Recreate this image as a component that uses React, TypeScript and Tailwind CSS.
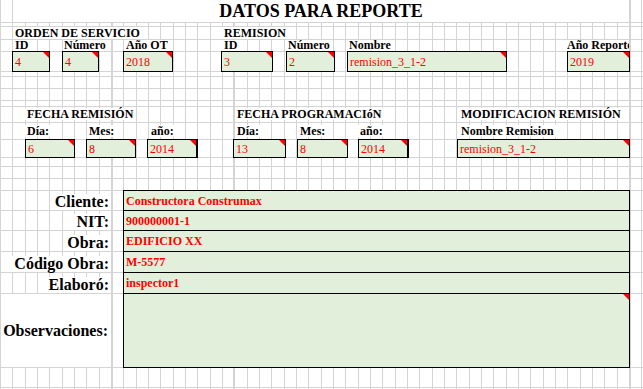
import type { ReactNode } from 'react'

// hoja tipo Excel: líneas verticales de la cuadrícula en el fondo
const VGRID =
  '[background-image:linear-gradient(to_right,transparent_112px,#d4d4d4_112px_113px,transparent_113px_233px,#d4d4d4_233px_234px,transparent_234px_630px,#d4d4d4_630px_631px,transparent_631px),linear-gradient(to_right,#d4d4d4_1px,transparent_1px_12px,#d4d4d4_12px_13px,transparent_13px_25px,#d4d4d4_25px_26px,transparent_26px)] [background-size:100%_100%,37px_100%]'

const ROW = 'flex shrink-0 border-b border-[#d4d4d4]'

function Flag() {
  return (
    <svg className="absolute right-0 top-0" width="6" height="6" viewBox="0 0 6 6">
      <polygon points="0,0 6,0 6,6" fill="#ff0000" />
    </svg>
  )
}

function Lbl({ children, className = '' }: { children: ReactNode; className?: string }) {
  return (
    <span className={`whitespace-nowrap bg-white px-[2px] text-[12px] font-bold ${className}`}>
      {children}
    </span>
  )
}

function Box({ value, className }: { value: string; className: string }) {
  return (
    <div
      className={`relative -mt-px flex shrink-0 items-center border border-black bg-[#e2efda] pl-[2px] text-[12px] leading-[12px] text-[#ff0000] ${className}`}
    >
      <span className="whitespace-nowrap">{value}</span>
      <Flag />
    </div>
  )
}

type FieldProps = { label: string; value: string; row: string; box: string }

function Field({ label, value, row, box }: FieldProps) {
  return (
    <div className={`${ROW} ${row}`}>
      <div className="flex w-[111px] shrink-0 items-end justify-end leading-[16px]">
        <span className="whitespace-nowrap bg-white px-[2px] text-[16px] font-bold">{label}</span>
      </div>
      <div
        className={`relative ml-[12px] -mt-px flex w-[507px] shrink-0 items-center border border-black bg-[#e2efda] pl-[2px] text-[12px] font-bold leading-[12px] text-[#ff0000] ${box}`}
      >
        {value}
      </div>
    </div>
  )
}

export default function App() {
  return (
    <div
      className={`flex h-[389px] w-[643px] flex-col overflow-hidden bg-white font-['Liberation_Serif','Times_New_Roman',serif] text-black ${VGRID}`}
    >
      {/* título */}
      <div className={`${ROW} h-[23px]`}>
        <div className="ml-[13px] w-[616px] bg-white text-center text-[18px] font-bold leading-[22px]">
          DATOS PARA REPORTE
        </div>
      </div>
      <div className={`${ROW} h-[4px]`} />

      {/* orden de servicio / remision */}
      <div className={`${ROW} h-[13px] items-end leading-[12px]`}>
        <div className="ml-[13px] flex w-[209px] shrink-0">
          <Lbl>ORDEN DE SERVICIO</Lbl>
        </div>
        <div className="flex">
          <Lbl>REMISION</Lbl>
        </div>
      </div>
      <div className={`${ROW} h-[12px] items-end leading-[11px]`}>
        <div className="ml-[13px] flex w-[36px] shrink-0">
          <Lbl>ID</Lbl>
        </div>
        <div className="ml-[14px] flex w-[35px] shrink-0">
          <Lbl className="pl-px">Número</Lbl>
        </div>
        <div className="ml-[26px] flex w-[48px] shrink-0">
          <Lbl>Año OT</Lbl>
        </div>
        <div className="ml-[50px] flex w-[50px] shrink-0">
          <Lbl>ID</Lbl>
        </div>
        <div className="ml-[15px] flex w-[47px] shrink-0">
          <Lbl className="pl-px">Número</Lbl>
        </div>
        <div className="ml-[14px] flex w-[158px] shrink-0">
          <Lbl className="pl-px">Nombre</Lbl>
        </div>
        <div className="ml-[61px] flex w-[62px] shrink-0 overflow-hidden">
          <Lbl className="!px-0">Año Reporte</Lbl>
        </div>
      </div>
      <div className={`${ROW} h-[20px]`}>
        <Box value="4" className="ml-[12px] h-[21px] w-[38px]" />
        <Box value="4" className="ml-[12px] h-[21px] w-[37px]" />
        <Box value="2018" className="ml-[24px] h-[21px] w-[50px]" />
        <Box value="3" className="ml-[48px] h-[21px] w-[52px]" />
        <Box value="2" className="ml-[13px] h-[21px] w-[49px]" />
        <Box value="remision_3_1-2" className="ml-[12px] h-[21px] w-[160px]" />
        <Box value="2019" className="ml-[60px] h-[21px] w-[63px]" />
      </div>

      <div className={`${ROW} h-[5px]`} />
      <div className={`${ROW} h-[12px]`} />
      <div className={`${ROW} h-[12px]`} />
      <div className={`${ROW} h-[6px]`} />

      {/* fechas */}
      <div className={`${ROW} h-[16px] items-end pb-[2px] leading-[12px]`}>
        <div className="ml-[25px] flex w-[208px] shrink-0">
          <Lbl>FECHA REMISIÓN</Lbl>
        </div>
        <div className="flex w-[224px] shrink-0">
          <Lbl className="ml-[2px]">FECHA PROGRAMACIóN</Lbl>
        </div>
        <div className="flex">
          <Lbl className="ml-[2px]">MODIFICACION REMISIÓN</Lbl>
        </div>
      </div>
      <div className={`${ROW} h-[17px] items-end pb-[2px] leading-[12px]`}>
        <div className="ml-[25px] flex w-[50px] shrink-0">
          <Lbl>Día:</Lbl>
        </div>
        <div className="ml-[11px] flex w-[50px] shrink-0">
          <Lbl className="ml-px">Mes:</Lbl>
        </div>
        <div className="ml-[11px] flex w-[51px] shrink-0">
          <Lbl className="ml-[2px]">año:</Lbl>
        </div>
        <div className="ml-[35px] flex w-[53px] shrink-0">
          <Lbl className="ml-[2px]">Día:</Lbl>
        </div>
        <div className="ml-[11px] flex w-[51px] shrink-0">
          <Lbl className="ml-px">Mes:</Lbl>
        </div>
        <div className="ml-[10px] flex w-[51px] shrink-0">
          <Lbl>año:</Lbl>
        </div>
        <div className="ml-[48px] flex w-[173px] shrink-0">
          <Lbl className="ml-[2px]">Nombre Remision</Lbl>
        </div>
      </div>
      <div className={`${ROW} h-[18px]`}>
        <Box value="6" className="ml-[25px] h-[19px] w-[50px]" />
        <Box value="8" className="ml-[11px] h-[19px] w-[50px]" />
        <Box value="2014" className="ml-[11px] h-[19px] w-[51px] border-r-2" />
        <Box value="13" className="ml-[35px] h-[19px] w-[53px]" />
        <Box value="8" className="ml-[11px] h-[19px] w-[51px]" />
        <Box value="2014" className="ml-[10px] h-[19px] w-[51px] border-r-2" />
        <Box value="remision_3_1-2" className="ml-[48px] h-[19px] w-[173px]" />
      </div>

      <div className={`${ROW} h-[9px]`} />
      <div className={`${ROW} h-[12px]`} />
      <div className={`${ROW} h-[12px]`} />

      {/* datos generales */}
      <Field label="Cliente:" value="Constructora Construmax" row="h-[20px]" box="h-[21px]" />
      <Field label="NIT:" value="900000001-1" row="h-[20px]" box="h-[21px]" />
      <Field label="Obra:" value="EDIFICIO XX" row="h-[21px]" box="h-[22px]" />
      <Field label="Código Obra:" value="M-5577" row="h-[21px]" box="h-[22px]" />
      <Field label="Elaboró:" value="inspector1" row="h-[21px]" box="h-[22px]" />

      <div className={`${ROW} h-[74px]`}>
        <div className="ml-px flex w-[110px] shrink-0 items-center justify-end bg-white pr-[3px] text-[16px] font-bold leading-[16px]">
          Observaciones:
        </div>
        <div className="ml-[2px] w-[10px] shrink-0 bg-white" />
        <div className="relative -mt-px h-[75px] w-[507px] shrink-0 border border-black bg-[#e2efda]">
          <Flag />
        </div>
      </div>

      <div className={`${ROW} h-[20px]`} />
      <div className="h-[1px] shrink-0" />
    </div>
  )
}
